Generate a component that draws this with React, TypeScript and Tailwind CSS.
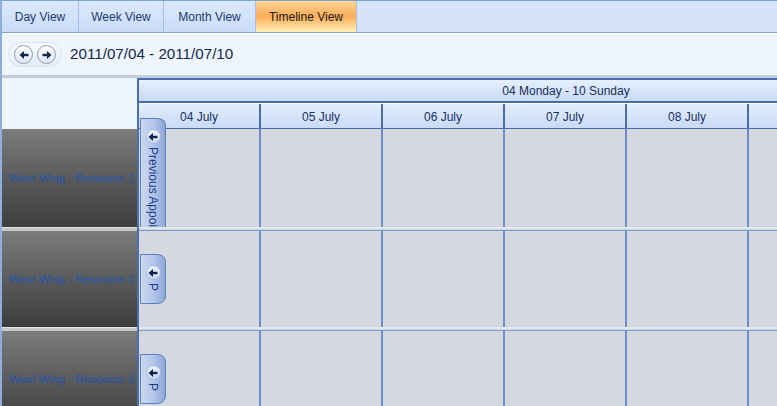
import React from "react";

const tabs = [
  { label: "Day View", w: "w-[77px]" },
  { label: "Week View", w: "w-[85px]" },
  { label: "Month View", w: "w-[92px]" },
  { label: "Timeline View", w: "w-[101px]", active: true },
];

const days = ["04 July", "05 July", "06 July", "07 July", "08 July", "09 July", "10 July"];

const resources = [
  { name: "West Wing - Resource 1", text: "Previous Appointment", first: true },
  { name: "West Wing - Resource 2", text: "P" },
  { name: "West Wing - Resource 3", text: "P" },
];

function Arrow({ dir }: { dir: "left" | "right" }) {
  return (
    <svg width="10" height="10" viewBox="0 0 10 10" className={dir === "right" ? "rotate-180" : ""}>
      <polygon points="0.5,5 5,1 5,9" fill="#10244f" />
      <rect x="4.5" y="3.8" width="5" height="2.4" fill="#10244f" />
    </svg>
  );
}

function NavButton({ dir }: { dir: "left" | "right" }) {
  return (
    <div className="flex h-[19px] w-[19px] items-center justify-center rounded-full border border-[#8f9fba] bg-gradient-to-b from-white to-[#dce6f4]">
      <Arrow dir={dir} />
    </div>
  );
}

function PrevTab({ text, first }: { text: string; first?: boolean }) {
  return (
    <div
      className={
        "absolute left-[1px] z-10 flex w-[26px] flex-col items-center overflow-hidden border border-[#5f80bd] bg-gradient-to-r from-[#cbd9f3] via-[#b3c7ec] to-[#8fa7d6] " +
        (first ? "top-[-11px] h-[109px] rounded-tr-[8px] border-b-0" : "top-[23px] h-[50px] rounded-r-[8px]")
      }
    >
      <div className="mt-[10px] flex h-[15px] w-[15px] shrink-0 items-center justify-center rounded-full border border-[#a9bbdc] bg-gradient-to-b from-[#eef3fc] to-[#c7d6f0]">
        <Arrow dir="left" />
      </div>
      <div className="mt-[3px] whitespace-nowrap text-[12px] leading-[14px] text-[#1c3b86] [writing-mode:vertical-rl]">
        {text}
      </div>
    </div>
  );
}

export default function App() {
  return (
    <div className="h-[406px] w-[777px] overflow-hidden bg-white font-['Liberation_Sans',Arial,sans-serif] text-[12px]">
      <div className="flex h-full flex-col border-l-2 border-[#8eaedb]">
        {/* view tabs */}
        <div className="flex h-[33px] shrink-0 border-t border-b border-[#7d9fd2] bg-[#d5e4fa]">
          {tabs.map((t) => (
            <div
              key={t.label}
              className={
                "flex items-center justify-center border-r border-[#a5bfe6] " +
                t.w +
                (t.active
                  ? " bg-gradient-to-b from-[#fdd394] via-[#fbad58] to-[#fff0b5] text-[#1a1a1a]"
                  : " bg-gradient-to-b from-[#dce9fc] to-[#c9dcf7] text-[#1d3a6e]")
              }
            >
              {t.label}
            </div>
          ))}
        </div>

        {/* toolbar */}
        <div className="flex h-[45px] shrink-0 items-center border-t border-b-[3px] border-t-white border-b-[#c3ccd9] bg-[#eef5fe] pl-[6px]">
          <div className="flex h-[25px] items-center gap-[4px] rounded-full border border-[#dbe4f1] bg-gradient-to-b from-[#f7faff] to-[#e3ebf7] px-[5px]">
            <NavButton dir="left" />
            <NavButton dir="right" />
          </div>
          <span className="ml-[8px] text-[15.2px] text-[#14284c]">2011/07/04 - 2011/07/10</span>
        </div>

        {/* header */}
        <div className="flex h-[51px] shrink-0">
          <div className="w-[135px] shrink-0 bg-[#eef5fe]" />
          <div className="flex flex-1 flex-col overflow-hidden border-l-2 border-[#4d6fab]">
            <div className="flex h-[25px] shrink-0 items-center border-t-2 border-b-2 border-[#4a6caa] bg-gradient-to-b from-[#e6effd] to-[#c7d9f5] pt-[1px] text-[#1a2f5e]">
              <div className="w-[854px] shrink-0 text-center">04 Monday - 10 Sunday</div>
            </div>
            <div className="flex flex-1 border-t border-b border-t-white border-b-[#4a6caa]">
              {days.map((d) => (
                <div
                  key={d}
                  className="flex w-[122px] shrink-0 items-center justify-center border-r-2 border-[#4a6caa] bg-gradient-to-b from-[#e3edfd] to-[#cadbf6] pt-[2px] text-[#15306b]"
                >
                  {d}
                </div>
              ))}
            </div>
          </div>
        </div>

        {/* resource rows */}
        {resources.map((r) => (
          <div key={r.name} className={"flex shrink-0 " + (r.first ? "h-[102px]" : "h-[100px]")}>
            <div className="flex w-[135px] shrink-0 flex-col">
              <div className="flex flex-1 items-center whitespace-nowrap bg-gradient-to-b from-[#7c7c7c] to-[#3d3d3d] pl-[7px] text-[11.6px] text-[#2255ae]">
                {r.name}
              </div>
              <div className="h-[4px] border-t border-[#e4e4e4] bg-[#c6c6c6]" />
            </div>
            <div className="relative flex flex-1 flex-col border-l-2 border-[#4d6fab] bg-[#d4d8e0]">
              <div className="flex flex-1 overflow-hidden">
                {days.map((d) => (
                  <div key={d} className="w-[122px] shrink-0 border-r-2 border-[#6f8ec5]" />
                ))}
              </div>
              <div className="h-[4px] border-t-2 border-b border-t-[#e3e6eb] border-b-[#7a99cc] bg-[#cfd4dc]" />
              <PrevTab text={r.text} first={r.first} />
            </div>
          </div>
        ))}
      </div>
    </div>
  );
}
